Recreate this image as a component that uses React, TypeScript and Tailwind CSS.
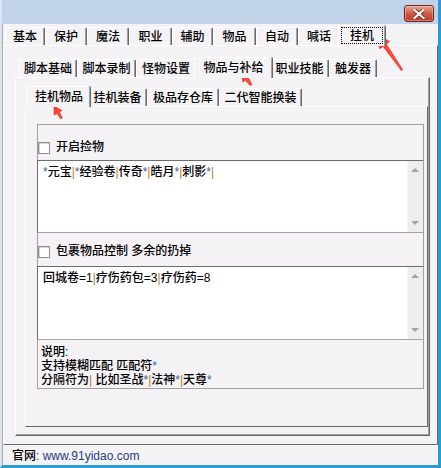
import React from "react";

type TabDef = { label: string; w: string; sel?: boolean; focus?: boolean };

const topTabs: TabDef[] = [
  { label: "基本", w: "w-[40px]" },
  { label: "保护", w: "w-[42px]" },
  { label: "魔法", w: "w-[42px]" },
  { label: "职业", w: "w-[43px]" },
  { label: "辅助", w: "w-[41px]" },
  { label: "物品", w: "w-[43px]" },
  { label: "自动", w: "w-[42px]" },
  { label: "喊话", w: "w-[42px]" },
  { label: "挂机", w: "w-[47px]", sel: true, focus: true },
];

const midTabs: TabDef[] = [
  { label: "脚本基础", w: "w-[58px]" },
  { label: "脚本录制", w: "w-[59px]" },
  { label: "怪物设置", w: "w-[60px]" },
  { label: "物品与补给", w: "w-[78px]", sel: true },
  { label: "职业技能", w: "w-[59px]" },
  { label: "触发器", w: "w-[48px]" },
];

const subTabs: TabDef[] = [
  { label: "挂机物品", w: "w-[63px]", sel: true },
  { label: "挂机装备", w: "w-[59px]" },
  { label: "极品存仓库", w: "w-[72px]" },
  { label: "二代智能换装", w: "w-[83px]" },
];

function Tab({ t }: { t: TabDef }) {
  if (t.sel) {
    return (
      <div
        className={`relative z-10 -mx-[2px] -mb-px flex h-[21px] ${t.w} shrink-0 items-start justify-center rounded-t-[2px] border-l border-t border-white bg-[#f5f2f6] pt-[1px] shadow-[inset_-1px_0_0_#a0a0a0,1px_0_0_#696969]`}
      >
        {t.focus ? (
          <span className="flex h-[17px] items-center border border-dotted border-black px-[8px] leading-[14px]">{t.label}</span>
        ) : (
          <span className="pt-[2px] leading-[14px]">{t.label}</span>
        )}
      </div>
    );
  }
  return (
    <div
      className={`flex h-[18px] ${t.w} shrink-0 items-center justify-center rounded-t-[2px] border-l border-t border-white border-r border-r-[#696969] shadow-[inset_-1px_0_0_#a0a0a0] leading-[14px]`}
    >
      {t.label}
    </div>
  );
}

function TabRow({ tabs, pl }: { tabs: TabDef[]; pl: string }) {
  return (
    <div className={`flex h-[21px] shrink-0 items-end ${pl}`}>
      {tabs.map((t) => (
        <Tab key={t.label} t={t} />
      ))}
    </div>
  );
}

function CheckBox() {
  return <div className="h-[12px] w-[12px] shrink-0 border border-[#8e8e8e] bg-white shadow-[inset_1px_1px_0_#d6d6d6]" />;
}

function ScrollBar() {
  return (
    <div className="flex w-[16px] shrink-0 flex-col items-center justify-between bg-[#eeedf0] py-[7px] shadow-[inset_1px_0_0_#f7f7f7]">
      <svg width="8" height="4" viewBox="0 0 8 4">
        <polygon points="0,4 4,0 8,4" fill="#a4a4a4" />
      </svg>
      <svg width="8" height="4" viewBox="0 0 8 4">
        <polygon points="0,0 8,0 4,4" fill="#a4a4a4" />
      </svg>
    </div>
  );
}

function Memo({ h, children }: { h: string; children: React.ReactNode }) {
  return (
    <div className={`flex ${h} shrink-0 border border-[#a3a3a3] border-t-[#6d6d6d] border-l-[#6d6d6d] bg-white`}>
      <div className="flex-1 pl-[5px] pt-[4px] leading-[14px]">{children}</div>
      <ScrollBar />
    </div>
  );
}

const P = () => <span className="text-[#c07a28]">|</span>;
const S = () => <span className="text-[#2f62a8]">*</span>;

function Arrow({ points }: { points: string }) {
  return <polygon points={points} fill="url(#redg)" stroke="#e0231b" strokeWidth="0.6" strokeLinejoin="round" />;
}

export default function App() {
  return (
    <div className="relative flex h-[468px] w-[441px] flex-col overflow-hidden border-b-[3px] border-l-2 border-r-[3px] border-b-[#2e9ad3] border-l-[#dbe6f2] border-r-[#2e9ad3] bg-gradient-to-b from-[#bfd2e8] to-[#d8e4f1] font-['Liberation_Sans','Noto_Sans_CJK_SC',sans-serif] text-[12px] font-medium text-black">
      {/* title bar */}
      <div className="flex h-[24px] shrink-0 items-start justify-end pr-[4px] pt-[5px]">
        <div className="flex h-[17px] w-[30px] items-center justify-center rounded-[3px] border border-[#6e2218] bg-gradient-to-b from-[#e6a393] via-[#cf5a45] to-[#c0392a] shadow-[inset_0_0_0_1px_rgba(255,255,255,0.35)]">
          <svg width="12" height="10" viewBox="0 0 12 10">
            <path d="M1.5 1 L10.5 9 M10.5 1 L1.5 9" stroke="#5a1a12" strokeWidth="3.6" strokeLinecap="square" />
            <path d="M1.5 1 L10.5 9 M10.5 1 L1.5 9" stroke="#ffffff" strokeWidth="2.2" strokeLinecap="square" />
          </svg>
        </div>
      </div>

      {/* client area */}
      <div className="flex flex-1 flex-col border-l border-[#a9a9a9] bg-[#f5f2f6]">
        <TabRow tabs={topTabs} pl="pl-[2px]" />
        <div className="flex flex-1 flex-col border border-white border-b-[#696969] border-r-[#696969] pb-[8px] pl-[11px] pr-[7px] pt-[10px]">
          <TabRow tabs={midTabs} pl="pl-[4px]" />
          <div className="flex flex-1 flex-col border border-white border-b-[#696969] border-r-[#696969] pb-[8px] pl-[9px] pr-[1px] pt-[7px] shadow-[inset_-1px_-1px_0_#a0a0a0]">
            <TabRow tabs={subTabs} pl="pl-[4px]" />
            <div className="flex flex-1 flex-col border border-white border-b-[#696969] border-r-[#696969] pl-[11px] pr-[3px] pt-[17px]">
              <div className="flex h-[36px] items-end border-l border-r border-t border-[#a0a0a0] pb-[6px]">
                <CheckBox />
                <span className="ml-[6px] leading-[14px]">开启捡物</span>
              </div>
              <Memo h="h-[73px]">
                <S />元宝<P /><S />经验卷<P />传奇<S /><P />皓月<S /><P />刺影<S /><P />
              </Memo>
              <div className="flex h-[33px] items-end border-l border-r border-[#a0a0a0] pb-[8px]">
                <CheckBox />
                <span className="ml-[6px] leading-[14px]">包裹物品控制 多余的扔掉</span>
              </div>
              <Memo h="h-[74px]">
                回城卷=1<P />疗伤药包=3<P />疗伤药=8
              </Memo>
              <div className="h-[49px] border border-t-0 border-[#a0a0a0] pl-[3px] pt-[5px] leading-[14px]">
                <div>说明:</div>
                <div>
                  支持模糊匹配 匹配符<S />
                </div>
                <div>
                  分隔符为<P /> 比如圣战<S /><P />法神<S /><P />天尊<S />
                </div>
              </div>
            </div>
          </div>
        </div>
        <div className="flex h-[20px] shrink-0 items-center border-t border-white pl-[9px]">
          官网<span className="text-[#1c3f7c]">: www.91yidao.com</span>
        </div>
      </div>

      {/* red annotation arrows */}
      <svg className="pointer-events-none absolute left-0 top-0" width="441" height="468" viewBox="0 0 441 468">
        <defs>
          <linearGradient id="redg" x1="0" y1="0" x2="1" y2="1">
            <stop offset="0" stopColor="#ff3a2a" />
            <stop offset="1" stopColor="#f25a4a" />
          </linearGradient>
        </defs>
        <Arrow points="374,33 387.6,41.7 384.3,44 400.7,69.5 399.3,70.5 381.1,46.4 377.8,48.7" />
        <Arrow points="239,72 248.6,75.7 246.3,77.5 250,84.5 248,85.5 243.2,80.3 241,82.1" />
        <Arrow points="52,106 59.9,110.6 57.5,112 60.3,118 58.7,118.9 55,113.6 52.1,115.1" />
      </svg>
    </div>
  );
}
